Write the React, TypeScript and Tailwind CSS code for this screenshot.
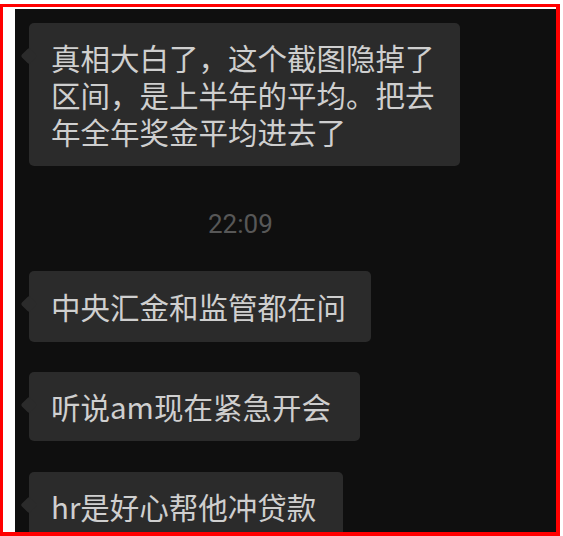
const cjk = "font-['Noto_Sans_CJK_SC','Noto_Sans',sans-serif]";

function Bubble({ children, className = "" }: { children: React.ReactNode; className?: string }) {
  return (
    <div
      className={`relative w-fit rounded-[5px] bg-[#2b2b2b] pl-[22px] pr-[25px] text-[29.5px] leading-[37px] text-[#cfcfcf] ${cjk} ${className}`}
    >
      {/* tail */}
      <span className="absolute left-[-6px] top-[27px] size-[12px] rotate-45 rounded-[2px] bg-[#2b2b2b]" />
      <span className="relative">{children}</span>
    </div>
  );
}

export default function App() {
  return (
    <div className="h-[536px] w-[563px] overflow-hidden bg-white pt-[4px]">
      <div className="h-[532px] w-[560px] border-t-[3px] border-l-[3px] border-r-4 border-b-4 border-[#ff0000] pt-[2px] pl-[12px]">
        <div className="h-full w-full overflow-hidden bg-[#0f0f0f] pt-[14px] pl-[14px]">
          <Bubble className="w-[432px] py-4">
            真相大白了，这个截图隐掉了
            <br />
            区间，是上半年的平均。把去
            <br />
            年全年奖金平均进去了
          </Bubble>

          <div className="mt-[43px] pl-[179px] font-['Roboto','Liberation_Sans',sans-serif] text-[26px] leading-[30px] text-[#575757]">
            22:09
          </div>

          <Bubble className="mt-[32px] py-[17px]">中央汇金和监管都在问</Bubble>
          <Bubble className="mt-[30px] py-[16px] pr-[29px]">听说am现在紧急开会</Bubble>
          <Bubble className="mt-[31px] py-[16px] pr-[27px]">hr是好心帮他冲贷款</Bubble>
        </div>
      </div>
    </div>
  );
}
